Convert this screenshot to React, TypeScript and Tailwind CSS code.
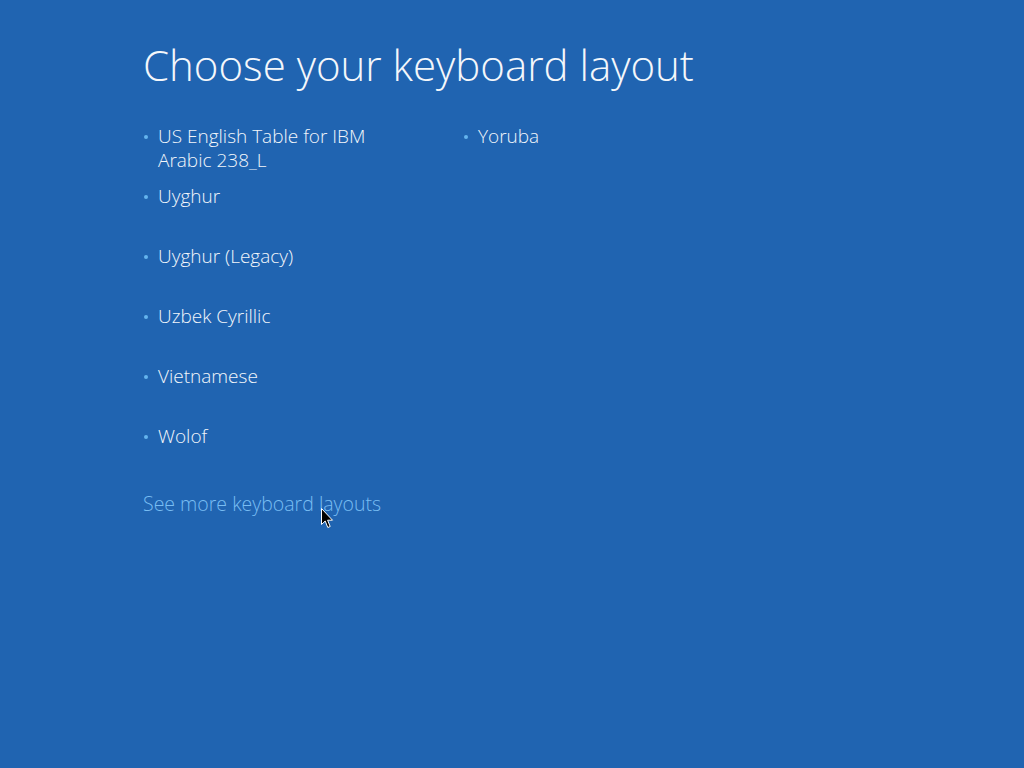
const leftItems = [
  ['US English Table for IBM', 'Arabic 238_L'],
  ['Uyghur'],
  ['Uyghur (Legacy)'],
  ['Uzbek Cyrillic'],
  ['Vietnamese'],
  ['Wolof'],
]

const rightItems = [['Yoruba']]

function LayoutItem({ lines }: { lines: string[] }) {
  return (
    <li className="flex h-[60px] items-start pl-[1px]">
      <span className="mt-[11px] mr-[10px] h-[4px] w-[4px] shrink-0 rounded-full bg-[#64b4ee]" />
      <span className="text-[19px] font-[350] leading-[24px] text-[#f2f6fb]">
        {lines.map((l) => (
          <span key={l} className="block">
            {l}
          </span>
        ))}
      </span>
    </li>
  )
}

function Cursor() {
  return (
    <svg className="absolute left-[321px] top-[508px]" width="13" height="21" viewBox="0 0 13 21">
      <path d="M0.5 0.5 L0.5 16.5 L4.2 13 L6.8 19.5 L9.2 18.5 L6.6 12.2 L11.5 12.2 Z" fill="#000" stroke="#fff" strokeWidth="1" strokeLinejoin="round" />
    </svg>
  )
}

export default function App() {
  return (
    <div
      className="relative h-[768px] w-[1024px] overflow-hidden bg-[#2064b1]"
      style={{ fontFamily: '"Open Sans", "Noto Sans", sans-serif' }}
    >
      <div className="pl-[143px] pt-[37px]">
        <h1 className="text-[42px] font-light leading-[56px] text-[#f4f7fb]">Choose your keyboard layout</h1>

        <div className="mt-[31px] flex">
          <ul className="w-[320px]">
            {leftItems.map((lines) => (
              <LayoutItem key={lines[0]} lines={lines} />
            ))}
          </ul>
          <ul className="w-[320px]">
            {rightItems.map((lines) => (
              <LayoutItem key={lines[0]} lines={lines} />
            ))}
          </ul>
        </div>

        <a className="mt-[8px] block text-[19.5px] font-[350] leading-[24px] text-[#78bdf3]">See more keyboard layouts</a>
      </div>
      <Cursor />
    </div>
  )
}
